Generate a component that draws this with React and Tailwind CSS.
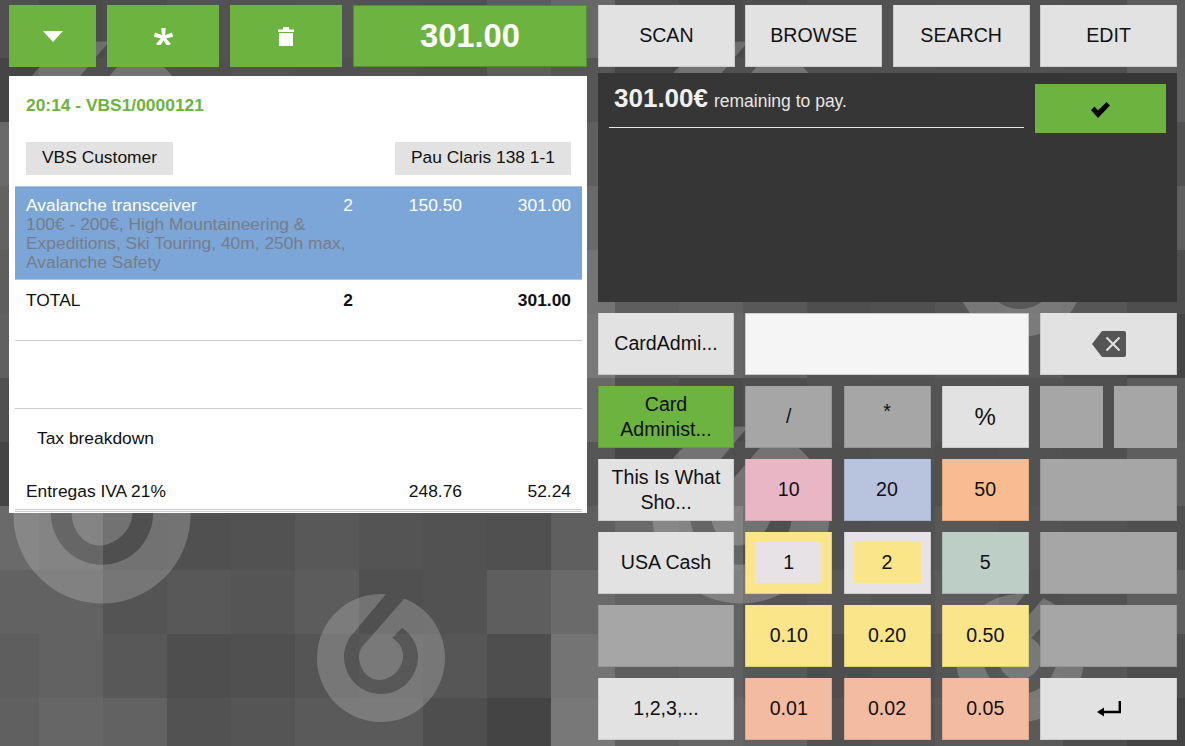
const tiles = [
  ["50", "4a", "4e", "52", "52", "54", "52", "50", "5c", "68"],
  ["45", "50", "50", "50", "52", "50", "52", "50", "5e", "56"],
  ["6a", "66", "4f", "50", "52", "58", "54", "52", "50", "5f"],
  ["62", "62", "54", "58", "55", "5c", "50", "52", "5e", "6a"],
  ["5e", "62", "58", "4e", "50", "55", "58", "56", "4e", "74"],
  ["60", "66", "62", "52", "55", "5a", "5a", "4e", "44", "78"],
];

const logos = [
  { x: 102, y: 130, r: 88.5 },
  { x: 741, y: 130, r: 88.5 },
  { x: 381, y: 273, r: 64 },
  { x: 1020, y: 273, r: 64 },
  { x: 102, y: 515, r: 88.5 },
  { x: 741, y: 515, r: 88.5 },
  { x: 381, y: 658, r: 64 },
  { x: 1020, y: 658, r: 64 },
];

const Background = () => {
  const rects = [];
  for (let row = 0; row < 12; row++) {
    for (let col = 0; col < 20; col++) {
      const shade = tiles[row % 6][col % 10];
      rects.push(
        <rect
          key={row + "-" + col}
          x={39 + 64 * (col - 1)}
          y={-6 + 64 * row}
          width="64"
          height="64"
          fill={"#" + shade + shade + shade}
        />
      );
    }
  }

  return (
    <svg className="absolute inset-0" width="1185" height="746" shapeRendering="crispEdges">
      {rects}
      {logos.map((l, i) => (
        <path
          key={i}
          shapeRendering="auto"
          transform={`translate(${l.x - l.r} ${l.y - l.r}) scale(${l.r / 64})`}
          fill="#ffffff"
          fillOpacity="0.2"
          d="M87.3 4.4A64 64 0 0 1 64 128A64 64 0 1 1 69 0.2L33 43C29 49 27 56 27 62C27 84 44 100 64 100C84 100 101 84 101 62C101 51 95 41 85 34L75 44C82 48 86 54 86 62C86 75 74 86 62 86C51 86 42 75 42 62C42 59 43 56 45 53L87.3 4.4Z"
        />
      ))}
    </svg>
  );
};

const Key = ({ className = "", children }) => (
  <div className={"flex items-center justify-center h-[62px] text-center text-[19.6px] leading-[25px] text-[#111] border-x border-b border-black/10 " + className}>
    {children}
  </div>
);

const GreenButton = ({ className = "", children }) => (
  <div className={"flex items-center justify-center h-[62px] bg-[#6cb33f] text-white " + className}>
    {children}
  </div>
);

const App = () => {
  return (
    <div className="relative w-[1185px] h-[746px] overflow-hidden font-['Liberation_Sans',Arial,sans-serif]">
      <Background />
      <div className="relative flex pt-[5px] pl-[9px] gap-x-[11px]">
        <div className="flex flex-col w-[578px] gap-y-[9px]">
          <div className="flex gap-x-[11px]">
            <GreenButton className="w-[87px]">
              <svg width="20" height="11" viewBox="0 0 20 11" className="mt-[1px]"><path d="M0 0H20L10 11Z" fill="#fff" /></svg>
            </GreenButton>
            <GreenButton className="w-[112px]">
              <svg width="19" height="17" viewBox="-9.5 -9.5 19 17" fill="#fff" className="mt-[1px]">
                <path d="M-2.2 -9.5H2.2L1.5 0H-1.5Z" />
                <path d="M-2.2 -9.5H2.2L1.5 0H-1.5Z" transform="rotate(72)" />
                <path d="M-2.2 -9.5H2.2L1.5 0H-1.5Z" transform="rotate(144)" />
                <path d="M-2.2 -9.5H2.2L1.5 0H-1.5Z" transform="rotate(216)" />
                <path d="M-2.2 -9.5H2.2L1.5 0H-1.5Z" transform="rotate(288)" />
              </svg>
            </GreenButton>
            <GreenButton className="w-[112px]">
              <svg width="16" height="19" viewBox="0 0 16 19" fill="#fff">
                <path d="M0 2.5H5V0H11V2.5H16V5H0ZM1 6H15V19H1Z" />
              </svg>
            </GreenButton>
            <GreenButton className="w-[234px] text-[32.7px] font-bold border border-[#55902f]">301.00</GreenButton>
          </div>

          <div className="flex flex-col h-[437px] bg-white pl-[6px] pr-[5px] text-[17.4px] leading-[19px] text-[#111]">
            <div className="pt-[20px] pl-[11px] font-bold text-[#6cb33f]">20:14 - VBS1/0000121</div>
            <div className="flex justify-between px-[11px] mt-[27px]">
              <div className="flex items-center h-[33px] px-[16px] pb-[3px] bg-[#e2e2e2]">VBS Customer</div>
              <div className="flex items-center h-[33px] px-[16px] pb-[3px] bg-[#e2e2e2]">Pau Claris 138 1-1</div>
            </div>
            <div className="grid grid-cols-[327px_109px_109px] h-[94px] mt-[11px] px-[11px] pt-[9px] bg-[#7ca6d8] border-y border-[#a9c3e2] text-white">
              <div>
                <div className="flex justify-between">
                  <span>Avalanche transceiver</span>
                  <span>2</span>
                </div>
                <div className="text-[#777d88]">100€ - 200€, High Mountaineering & Expeditions, Ski Touring, 40m, 250h max, Avalanche Safety</div>
              </div>
              <div className="text-right">150.50</div>
              <div className="text-right">301.00</div>
            </div>
            <div className="grid grid-cols-[327px_109px_109px] h-[61px] px-[11px] pt-[11px] border-b border-[#ccc]">
              <div className="flex justify-between">
                <span>TOTAL</span>
                <span className="font-bold">2</span>
              </div>
              <div />
              <div className="text-right font-bold">301.00</div>
            </div>
            <div className="h-[68px] border-b border-[#ccc]" />
            <div className="pl-[22px] pt-[20px]">Tax breakdown</div>
            <div className="flex mt-[34px] px-[11px]">
              <span className="w-[327px]">Entregas IVA 21%</span>
              <span className="w-[109px] text-right">248.76</span>
              <span className="w-[109px] text-right">52.24</span>
            </div>
            <div className="h-[3px] mt-[8px] border-y border-[#ccc]" />
          </div>
        </div>

        <div className="flex flex-col w-[579px] gap-y-[6px]">
          <div className="grid grid-cols-4 gap-x-[10.67px]">
            <Key className="bg-[#e2e2e2]">SCAN</Key>
            <Key className="bg-[#e2e2e2]">BROWSE</Key>
            <Key className="bg-[#e2e2e2]">SEARCH</Key>
            <Key className="bg-[#e2e2e2]">EDIT</Key>
          </div>

          <div className="flex justify-between h-[229px] pt-[11px] px-[11px] bg-[#363636]">
            <div className="w-[415px] h-[44px] border-b border-[#e6e6e6] text-[#e6e6e6]">
              <span className="pl-[5px] text-[26px] leading-[28px] font-bold text-[#f0f0f0]">301.00€</span>
              <span className="ml-[6px] text-[17.5px]">remaining to pay.</span>
            </div>
            <div className="flex items-center justify-center w-[131px] h-[49px] bg-[#6cb33f]">
              <svg width="19" height="16" viewBox="0 0 19 16" className="mt-[3px]">
                <path d="M0 8L3.5 4.5L7 8.5L15.5 0L19 3.5L7 16Z" fill="#000" />
              </svg>
            </div>
          </div>

          <div className="grid grid-cols-[136px_87px_87px_87px_137px] justify-between gap-y-[11px] mt-[5px]">
            <Key className="bg-[#e2e2e2]">CardAdmi...</Key>
            <div className="col-span-3 h-[62px] bg-[#f5f5f5] border border-[#ccc]" />
            <Key className="bg-[#e2e2e2]">
              <svg width="34" height="26" viewBox="0 0 34 26">
                <path d="M10 0H32Q34 0 34 2V24Q34 26 32 26H10L0 13Z" fill="#555" />
                <path d="M14.5 6.5L27.5 19.5M27.5 6.5L14.5 19.5" stroke="#e2e2e2" strokeWidth="2" />
              </svg>
            </Key>

            <Key className="bg-[#6cb33f]">Card<br />Administ...</Key>
            <Key className="bg-[#a6a6a6]">/</Key>
            <Key className="bg-[#a6a6a6] pb-[10px]">*</Key>
            <Key className="bg-[#e2e2e2] text-[24px]">%</Key>
            <div className="flex gap-x-[11px]">
              <div className="w-[63px] h-[62px] bg-[#a6a6a6]" />
              <div className="w-[63px] h-[62px] bg-[#a6a6a6]" />
            </div>

            <Key className="bg-[#e2e2e2]">This Is What<br />Sho...</Key>
            <Key className="bg-[#e8b6c4]">10</Key>
            <Key className="bg-[#b8c4de]">20</Key>
            <Key className="bg-[#f9bc91]">50</Key>
            <Key className="bg-[#a6a6a6]" />

            <Key className="bg-[#e2e2e2]">USA Cash</Key>
            <Key className="bg-[#fae588]">
              <div className="flex items-center justify-center w-[67px] h-[41px] bg-[#e6e2e6]">1</div>
            </Key>
            <Key className="bg-[#e6e2e6]">
              <div className="flex items-center justify-center w-[67px] h-[41px] bg-[#fae588]">2</div>
            </Key>
            <Key className="bg-[#bccec6]">5</Key>
            <Key className="bg-[#a6a6a6]" />

            <Key className="bg-[#a6a6a6]" />
            <Key className="bg-[#fae588]">0.10</Key>
            <Key className="bg-[#fae588]">0.20</Key>
            <Key className="bg-[#fae588]">0.50</Key>
            <Key className="bg-[#a6a6a6]" />

            <Key className="bg-[#e2e2e2]">1,2,3,...</Key>
            <Key className="bg-[#f3bb9f]">0.01</Key>
            <Key className="bg-[#f3bb9f]">0.02</Key>
            <Key className="bg-[#f3bb9f]">0.05</Key>
            <Key className="bg-[#e2e2e2]">
              <svg width="24" height="17" viewBox="0 0 24 17" fill="none" stroke="#000" strokeWidth="2.4" className="mt-[1px]">
                <path d="M22.8 0V11H3" />
                <path d="M0 11L7 6.5V15.5Z" fill="#000" stroke="none" />
              </svg>
            </Key>
          </div>
        </div>
      </div>
    </div>
  );
};

export default App;
